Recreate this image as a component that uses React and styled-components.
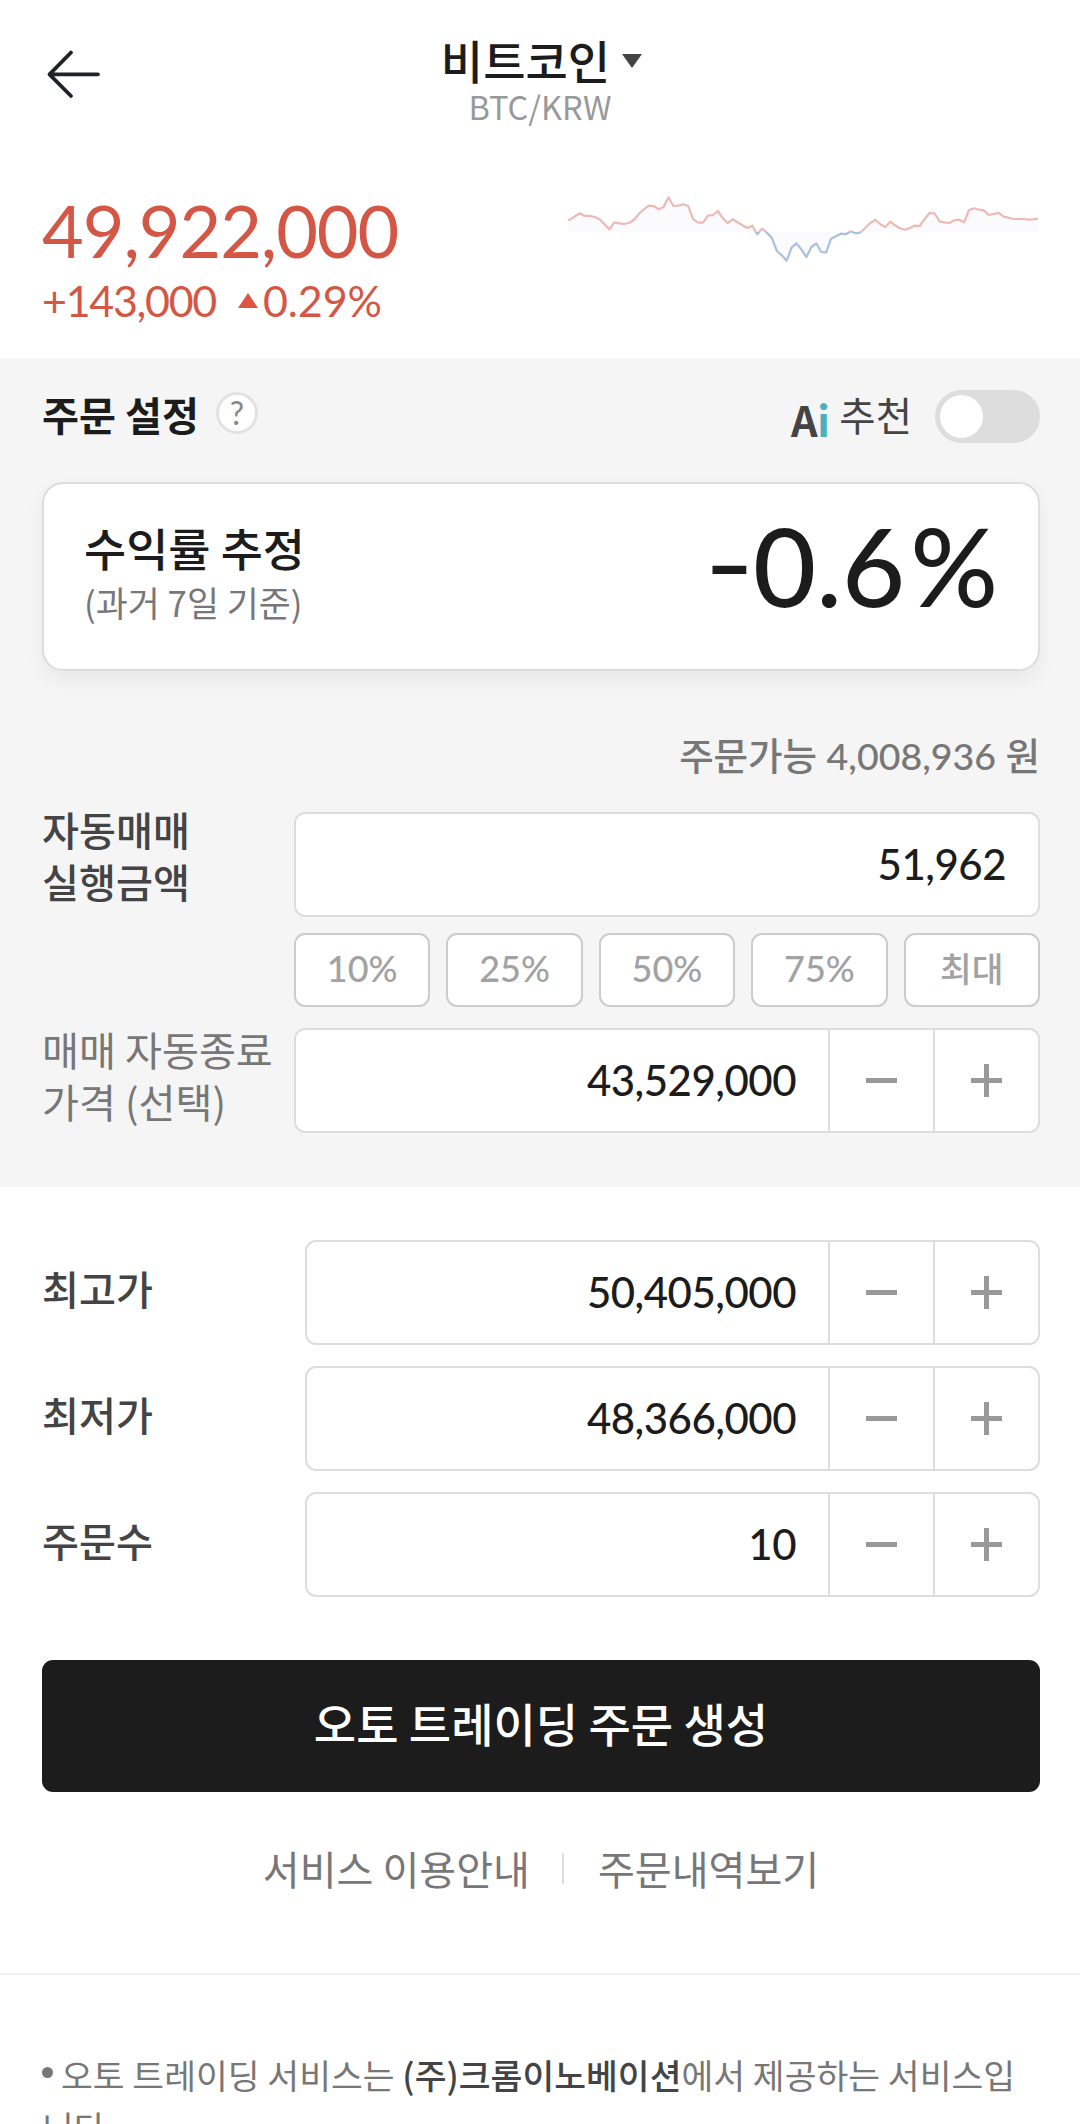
import React, { Component } from "react";
import styled, { createGlobalStyle } from "styled-components";

const GlobalStyle = createGlobalStyle`
  * {
    box-sizing: border-box;
  }
  body {
    margin: 0;
    background: #fff;
    font-family: "Noto Sans CJK KR", sans-serif;
    color: #1c1c1c;
  }
  button {
    font-family: inherit;
    padding: 0;
    margin: 0;
    border: 0;
    background: none;
  }
`;

const numberFont = `"Lato", "Noto Sans CJK KR", sans-serif`;

const Page = styled.div`
  width: 1080px;
  height: 2124px;
  overflow: hidden;
  background: #fff;
`;

const Header = styled.header`
  display: grid;
  grid-template-columns: 200px 1fr 200px;
  height: 150px;
  padding-top: 29px;
`;

const BackButton = styled.button`
  width: 56px;
  height: 50px;
  margin: 20px 0 0 46px;
  svg {
    display: block;
  }
`;

const Title = styled.div`
  text-align: center;
`;

const Coin = styled.div`
  display: flex;
  align-items: center;
  justify-content: center;
  gap: 12px;
  height: 60px;
  line-height: 60px;
  font-size: 46px;
  font-weight: 500;
  padding-left: 3px;
`;

const Triangle = styled.span`
  width: 0;
  height: 0;
  border-left: 10.5px solid transparent;
  border-right: 10.5px solid transparent;
  ${(props) =>
    props.$up
      ? "border-bottom: 15px solid #dd5344; margin: 0 5px 0 22px;"
      : "border-top: 14px solid #444; margin-top: 3px;"}
`;

const Pair = styled.div`
  margin-top: 1px;
  font-size: 32.5px;
  line-height: 32px;
  color: #999;
`;

const Ticker = styled.section`
  display: flex;
  justify-content: space-between;
  height: 208px;
  padding: 40px 42px 0;
  font-family: ${numberFont};
  color: #d45746;
`;

const Price = styled.div`
  font-size: 72px;
  line-height: 80px;
  letter-spacing: -1.05px;
`;

const Change = styled.div`
  display: flex;
  align-items: center;
  height: 60px;
  font-size: 43px;
  letter-spacing: -1.3px;
`;

const Percent = styled.span`
  letter-spacing: -0.1px;
`;

const Chart = styled.svg`
  width: 470px;
  height: 90px;
  margin-top: -2px;
`;

const Settings = styled.section`
  height: 829px;
  padding: 32px 40px 0 42px;
  background: #f5f5f5;
`;

const SettingsBar = styled.div`
  display: flex;
  align-items: center;
  height: 52px;
  h2 {
    margin: -5px 0 0;
    font-size: 40.2px;
    line-height: 52px;
    font-weight: 700;
  }
`;

const Help = styled.button`
  width: 42px;
  height: 42px;
  margin: -6px auto 0 17px;
  border: 3px solid #e2e2e2;
  border-radius: 50%;
  background: #fff;
  color: #888;
  font-size: 32px;
  line-height: 36px;
  font-family: ${numberFont};
`;

const AiLogo = styled.span`
  margin: 5px 10px 0 0;
  font-size: 41.5px;
  line-height: 44px;
  font-weight: 700;
  letter-spacing: -0.5px;
  color: #444;
  i {
    font-style: normal;
    color: #4bb0be;
  }
`;

const Recommend = styled.span`
  margin: -5px 23px 0 0;
  font-size: 39.5px;
  line-height: 52px;
  color: #444;
`;

const Toggle = styled.span`
  width: 105px;
  height: 53px;
  padding: 5px;
  border-radius: 27px;
  background: #ddd;
  &::before {
    content: "";
    display: block;
    width: 43px;
    height: 43px;
    border-radius: 50%;
    background: #fff;
  }
`;

const Card = styled.div`
  display: flex;
  justify-content: space-between;
  height: 189px;
  margin-top: 40px;
  padding: 33px 40px 0 40px;
  border: 2px solid #ddd;
  border-radius: 21px;
  background: #fff;
  box-shadow: 0 10px 20px rgba(0, 0, 0, 0.05);
`;

const CardTitle = styled.div`
  font-size: 45.8px;
  line-height: 60px;
  font-weight: 500;
`;

const CardSub = styled.div`
  font-size: 34.8px;
  line-height: 50px;
  color: #777;
`;

const Rate = styled.div`
  margin-top: -2px;
  font-family: ${numberFont};
  font-size: 109px;
  line-height: 100px;
  font-weight: 500;
`;

const Sign = styled.span`
  display: inline-block;
  margin-right: 3px;
  transform: translateY(-3px) scale(1.24, 0.9);
`;

const Digits = styled.span`
  margin-right: 5px;
`;

const Available = styled.div`
  height: 50px;
  margin-top: 60px;
  font-family: ${numberFont};
  font-size: 37.5px;
  line-height: 50px;
  font-weight: 500;
  text-align: right;
  color: #777;
`;

const FormRow = styled.div`
  display: grid;
  grid-template-columns: ${(props) => props.$labelWidth}px 1fr;
  margin-top: ${(props) => props.$top || 0}px;
`;

const Label = styled.div`
  margin-top: ${(props) => props.$top}px;
  font-size: 40.2px;
  line-height: 52px;
  white-space: nowrap;
  font-weight: ${(props) => (props.$light ? 400 : 500)};
  color: ${(props) => (props.$light ? "#777" : "#444")};
`;

const Field = styled.div`
  display: flex;
  height: 105px;
  border: 2px solid #ddd;
  border-radius: 11px;
  background: #fff;
`;

const Value = styled.div`
  flex: 1;
  padding-right: 32px;
  text-align: right;
  font-family: ${numberFont};
  font-size: 42px;
  line-height: 101px;
  font-weight: 500;
  letter-spacing: -0.5px;
  color: #1c1c1c;
`;

const StepButton = styled.button`
  display: flex;
  align-items: center;
  justify-content: center;
  width: 105px;
  border-left: 2px solid #ddd;
`;

const Chips = styled.div`
  display: grid;
  grid-template-columns: repeat(5, 1fr);
  gap: 16px;
  margin-top: 16px;
`;

const Chip = styled.button`
  height: 74px;
  padding-bottom: 3px;
  border: 2px solid #ccc;
  border-radius: 11px;
  background: #fff;
  font-family: ${numberFont};
  font-size: 36px;
  line-height: 67px;
  font-weight: 500;
  color: #a2a2a2;
  &:last-child {
    font-size: 34.5px;
  }
`;

const PriceForm = styled.section`
  padding: 53px 40px 0 42px;
`;

const Submit = styled.button`
  display: block;
  width: 100%;
  height: 132px;
  margin-top: 63px;
  padding-bottom: 8px;
  border-radius: 11px;
  background: #1c1c1c;
  color: #fff;
  font-size: 46px;
  font-weight: 500;
  line-height: 120px;
`;

const Links = styled.nav`
  display: flex;
  align-items: center;
  justify-content: center;
  height: 60px;
  margin-top: 45px;
  font-size: 40.1px;
  color: #777;
`;

const LinkDivider = styled.span`
  width: 2px;
  height: 31px;
  margin: 3px 34px 0 32px;
  background: #ddd;
`;

const Notice = styled.section`
  margin-top: 76px;
  padding: 73px 42px 0;
  border-top: 2px solid #f3f3f3;
  font-size: 34.6px;
  line-height: 52px;
  color: #777;
  word-break: break-all;
  b {
    font-weight: 500;
    color: #444;
  }
`;

const Bullet = styled.span`
  display: inline-block;
  width: 11px;
  height: 11px;
  margin-right: 8px;
  border-radius: 50%;
  background: #777;
  vertical-align: 11px;
`;

const points = [
  149, 139, 130, 138, 137, 141, 148, 163, 178, 157, 160, 162, 158, 149, 131, 118, 107, 108, 118, 111,
  82, 108, 107, 103, 108, 148, 158, 158, 137, 135, 123, 144, 159, 148, 157, 166, 174, 167, 193, 176,
  188, 205, 243, 256, 272, 232, 220, 239, 261, 231, 220, 246, 247, 206, 199, 191, 193, 184, 190, 187,
  173, 158, 149, 163, 171, 155, 166, 175, 179, 174, 167, 168, 147, 129, 130, 154, 157, 159, 151, 149,
  157, 120, 115, 119, 121, 135, 132, 128, 140, 143, 147, 147, 147, 149, 148, 146,
];

const BASE = 44;

const PriceChart = () => {
  const line = points.map((p, i) => `${(2 + i * 4.926).toFixed(1)},${((p - 54) / 3).toFixed(1)}`).join(" ");
  return (
    <Chart viewBox="0 0 470 90">
      <defs>
        <linearGradient id="updown" gradientUnits="userSpaceOnUse" x1="0" y1="0" x2="0" y2="88">
          <stop offset="50%" stopColor="#ebbab5" />
          <stop offset="50%" stopColor="#a9c0de" />
        </linearGradient>
      </defs>
      <polygon points={`0,${BASE} 0,32 ${line} 470,${BASE}`} fill="#fbfbfe" />
      <polyline
        points={`0,32 ${line}`}
        fill="none"
        stroke="url(#updown)"
        strokeWidth="2.2"
        strokeLinejoin="round"
      />
    </Chart>
  );
};

const Minus = () => (
  <svg width="31" height="33" viewBox="0 0 31 33">
    <path d="M0 16.5H31" stroke="#999" strokeWidth="5" />
  </svg>
);

const Plus = () => (
  <svg width="31" height="33" viewBox="0 0 31 33">
    <path d="M0 16.5H31M15.5 0V33" stroke="#999" strokeWidth="5" />
  </svg>
);

const Stepper = ({ value }) => (
  <Field>
    <Value>{value}</Value>
    <StepButton aria-label="minus">
      <Minus />
    </StepButton>
    <StepButton aria-label="plus">
      <Plus />
    </StepButton>
  </Field>
);

const ratios = ["10%", "25%", "50%", "75%", "최대"];

const priceRows = [
  { label: "최고가", value: "50,405,000" },
  { label: "최저가", value: "48,366,000" },
  { label: "주문수", value: "10" },
];

export default class App extends Component {
  render() {
    return (
      <Page>
        <GlobalStyle />
        <Header>
          <BackButton aria-label="back">
            <svg width="56" height="50" viewBox="0 0 56 50" fill="none" stroke="#1f2329" strokeWidth="3.8" strokeLinecap="round" strokeLinejoin="round">
              <path d="M52 25.3H3.5M25 3.5L3.5 25.3L25 47" />
            </svg>
          </BackButton>
          <Title>
            <Coin>
              비트코인
              <Triangle />
            </Coin>
            <Pair>BTC/KRW</Pair>
          </Title>
        </Header>
        <Ticker>
          <div>
            <Price>49,922,000</Price>
            <Change>
              <span>+143,000</span>
              <Triangle $up />
              <Percent>0.29%</Percent>
            </Change>
          </div>
          <PriceChart />
        </Ticker>
        <Settings>
          <SettingsBar>
            <h2>주문 설정</h2>
            <Help>?</Help>
            <AiLogo>
              A<i>i</i>
            </AiLogo>
            <Recommend>추천</Recommend>
            <Toggle />
          </SettingsBar>
          <Card>
            <div>
              <CardTitle>수익률 추정</CardTitle>
              <CardSub>(과거 7일 기준)</CardSub>
            </div>
            <Rate>
              <Sign>-</Sign>
              <Digits>0.6</Digits>%
            </Rate>
          </Card>
          <Available>주문가능 4,008,936 원</Available>
          <FormRow $labelWidth={252} $top={31}>
            <Label $top={-9}>
              자동매매
              <br />
              실행금액
            </Label>
            <div>
              <Field>
                <Value>51,962</Value>
              </Field>
              <Chips>
                {ratios.map((ratio) => (
                  <Chip key={ratio}>{ratio}</Chip>
                ))}
              </Chips>
            </div>
          </FormRow>
          <FormRow $labelWidth={252} $top={21}>
            <Label $light $top={-5}>
              매매 자동종료
              <br />
              가격 (선택)
            </Label>
            <Stepper value="43,529,000" />
          </FormRow>
        </Settings>
        <PriceForm>
          {priceRows.map((row, i) => (
            <FormRow key={row.label} $labelWidth={263} $top={i ? 21 : 0}>
              <Label $top={22}>{row.label}</Label>
              <Stepper value={row.value} />
            </FormRow>
          ))}
          <Submit>오토 트레이딩 주문 생성</Submit>
          <Links>
            <span>서비스 이용안내</span>
            <LinkDivider />
            <span>주문내역보기</span>
          </Links>
        </PriceForm>
        <Notice>
          <Bullet />
          오토 트레이딩 서비스는 <b>(주)크롬이노베이션</b>에서 제공하는 서비스입니다.
        </Notice>
      </Page>
    );
  }
}
